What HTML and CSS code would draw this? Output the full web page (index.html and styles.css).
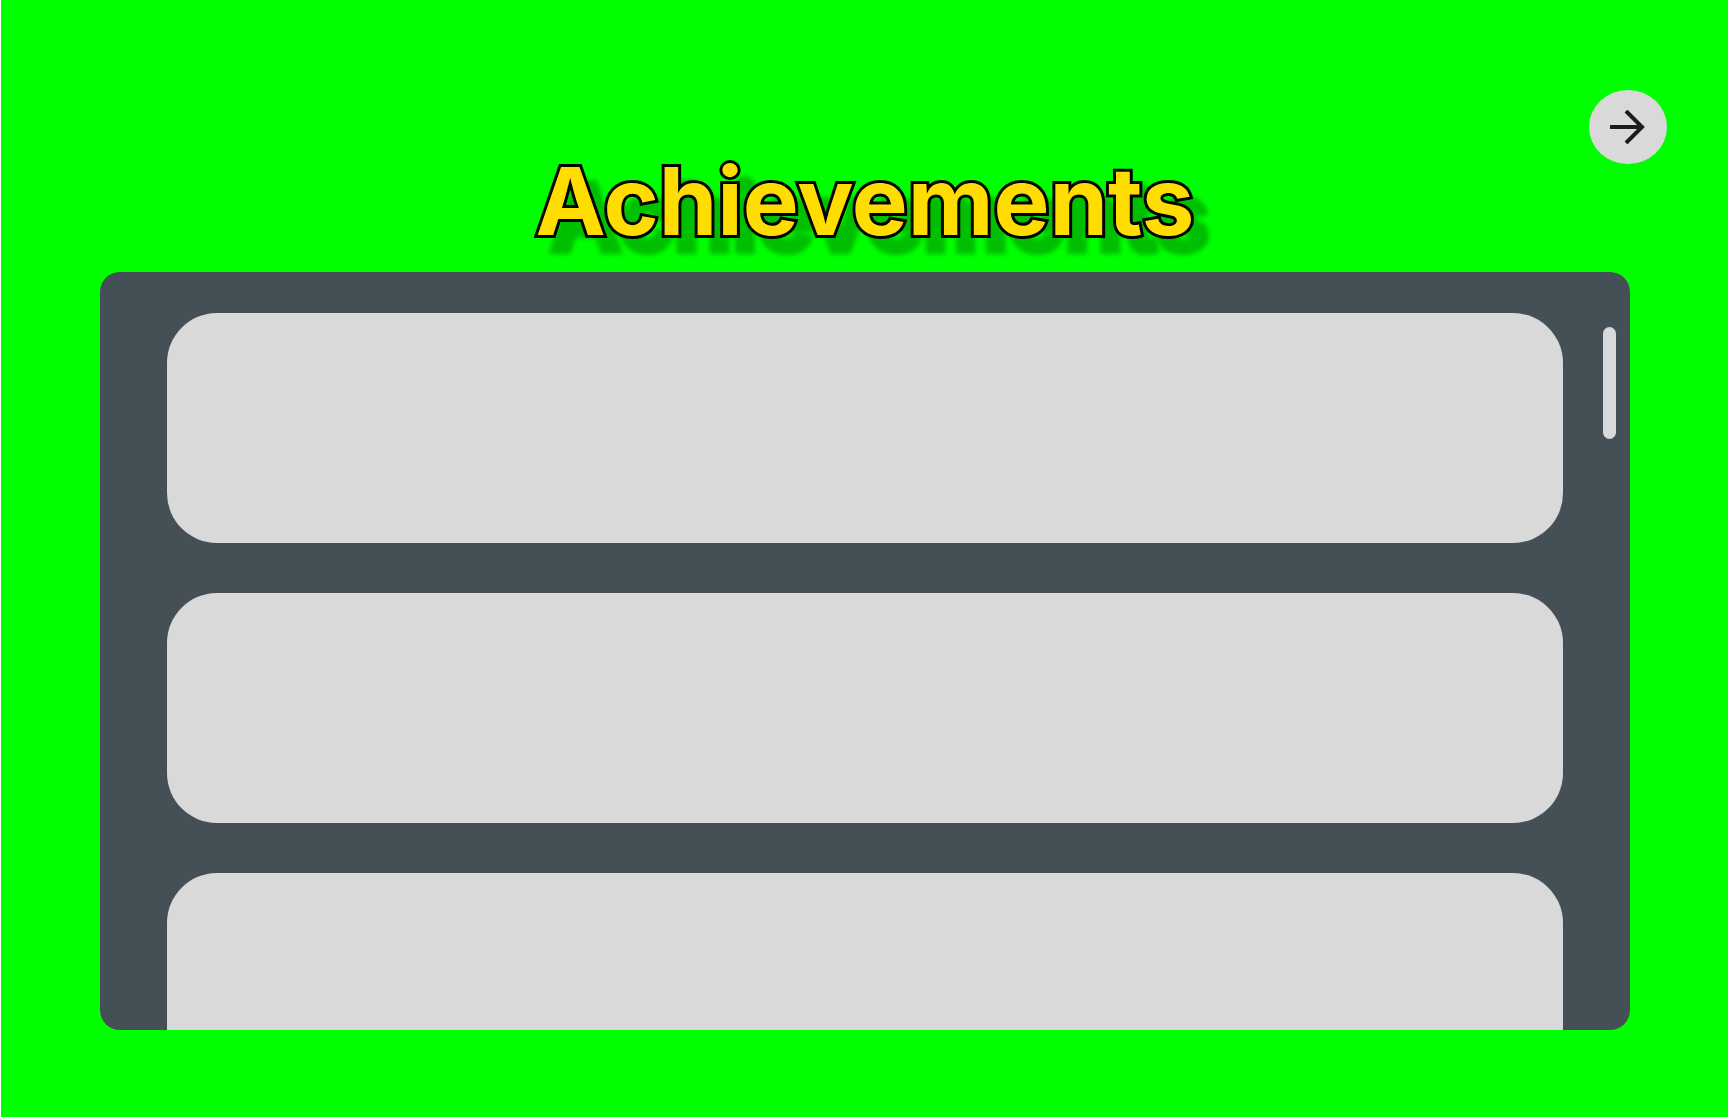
FILE: index.html
```html
<!DOCTYPE html>
<html lang="en">
<head>
<meta charset="utf-8">
<title>Achievements</title>
<link rel="stylesheet" href="styles.css">
</head>
<body>
<main class="screen">
  <header class="header">
    <button class="next" type="button" aria-label="Next">
      <svg class="next-icon" viewBox="0 0 36 34" aria-hidden="true">
        <path d="M0 17H31M16 1L32 17L16 33" fill="none" stroke="#1d1b20" stroke-width="4"/>
      </svg>
    </button>
    <h1 class="title">Achievements</h1>
  </header>
  <section class="panel">
    <ul class="list">
      <li class="card"></li>
      <li class="card"></li>
      <li class="card"></li>
    </ul>
    <div class="track"><div class="thumb"></div></div>
  </section>
</main>
</body>
</html>
```
FILE: styles.css
```css
* {
  box-sizing: border-box;
}

body {
  margin: 0;
  background: #fff;
  font-family: Inter, "Liberation Sans", sans-serif;
}

.screen {
  display: flex;
  flex-direction: column;
  height: 100vh;
  margin: 0 1px;
  padding: 90px 98px 87px 99px;
  background: #0f0;
}

.header {
  display: flex;
  flex-direction: column;
  height: 182px;
}

.next {
  display: flex;
  align-items: center;
  justify-content: center;
  align-self: flex-end;
  flex: none;
  width: 78px;
  height: 74px;
  margin-right: -37px;
  padding: 0;
  border: 0;
  border-radius: 50%;
  background: #d9d9d9;
}

.next-icon {
  width: 36px;
  height: 34px;
}

.title {
  margin: -21px 0 0;
  color: #ffdd00;
  font-size: 94px;
  font-weight: 700;
  line-height: 116px;
  text-align: center;
  -webkit-text-stroke: 6px #000;
  paint-order: stroke fill;
  filter: drop-shadow(15px 16px 2px rgba(0, 0, 0, 0.25));
}

.panel {
  display: flex;
  flex: 1;
  min-height: 0;
  padding-left: 67px;
  border-radius: 20px;
  background: #455056;
  overflow: hidden;
}

.list {
  display: flex;
  flex: 1;
  flex-direction: column;
  gap: 50px;
  margin: 0;
  padding: 41px 0 0;
  list-style: none;
}

.card {
  flex: none;
  height: 230px;
  border-radius: 50px;
  background: #d9d9d9;
}

.track {
  width: 67px;
  padding: 55px 14px 0 40px;
}

.thumb {
  width: 13px;
  height: 112px;
  border-radius: 7px;
  background: #d9d9d9;
}
```
